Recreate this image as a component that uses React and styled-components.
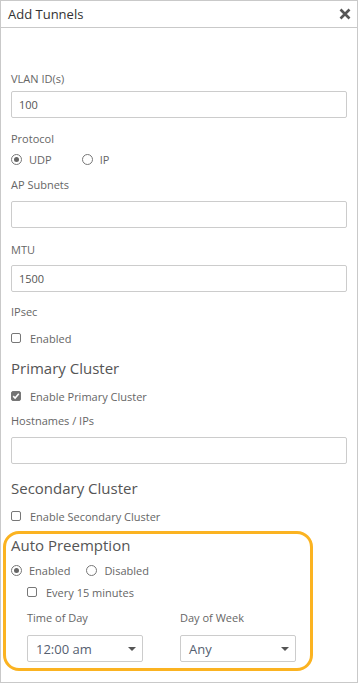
import React from 'react';
import styled, { createGlobalStyle } from 'styled-components';

const GlobalStyle = createGlobalStyle`
  html, body {
    margin: 0;
    padding: 0;
    background: #ffffff;
  }
  body {
    font-family: 'Open Sans', 'Liberation Sans', sans-serif;
  }
`;

const Dialog = styled.div`
  box-sizing: border-box;
  width: 358px;
  height: 683px;
  border: 1px solid #c9c9c9;
  background: #fff;
  display: flex;
  flex-direction: column;
`;

const Header = styled.div`
  height: 26px;
  border-bottom: 1px solid #c9c9c9;
  display: flex;
  align-items: center;
  justify-content: space-between;
  padding: 0 5px 0 7px;
`;

const Title = styled.h1`
  margin: 0;
  font-size: 13px;
  font-weight: normal;
  color: #333;
  line-height: 18px;
`;

const CloseButton = styled.button`
  border: 0;
  background: none;
  padding: 0;
  width: 14px;
  height: 14px;
  display: flex;
  align-items: center;
  justify-content: center;
  cursor: pointer;
`;

const Body = styled.div`
  padding: 43px 10px 0 10px;
`;

const Label = styled.div`
  font-size: 11px;
  line-height: 16px;
  color: #666;
  margin-top: ${(p) => p.$mt || 0}px;
`;

const Heading = styled.div`
  font-size: 15px;
  line-height: 20px;
  color: #555;
  margin-top: ${(p) => p.$mt || 0}px;
`;

const TextInput = styled.input`
  display: block;
  box-sizing: border-box;
  width: 100%;
  height: 27px;
  margin: ${(p) => p.$mt || 0}px 0 0 0;
  padding: 0 7px;
  border: 1px solid #cccccc;
  border-radius: 2px;
  font-family: 'Open Sans', 'Liberation Sans', sans-serif;
  font-size: 11px;
  color: #555;
  outline: none;
`;

const OptionRow = styled.div`
  display: flex;
  align-items: center;
  height: 16px;
  margin-top: ${(p) => p.$mt || 0}px;
`;

const Option = styled.label`
  display: flex;
  align-items: center;
  gap: ${(p) => (p.$box ? 9 : 7)}px;
  margin-right: ${(p) => p.$space || 0}px;
  font-size: 11px;
  color: #666;
`;

const Radio = styled.span`
  box-sizing: border-box;
  width: 11px;
  height: 11px;
  border: 1px solid #777;
  border-radius: 50%;
  display: flex;
  align-items: center;
  justify-content: center;
  &::after {
    content: '';
    display: ${(p) => (p.$checked ? 'block' : 'none')};
    width: 5px;
    height: 5px;
    border-radius: 50%;
    background: #666;
  }
`;

const Box = styled.span`
  box-sizing: border-box;
  width: 10px;
  height: 10px;
  border: 1px solid #777;
  border-radius: 2px;
  background: ${(p) => (p.$checked ? '#737373' : '#fff')};
  display: flex;
  align-items: center;
  justify-content: center;
`;

const Highlight = styled.div`
  margin: 7px 34px 0 -8px;
  border: 3px solid #fbb321;
  border-radius: 16px;
  padding: 1px 5px 6px 5px;
`;

const Indent = styled.div`
  padding-left: 16px;
`;

const SelectGrid = styled.div`
  display: grid;
  grid-template-columns: 116px 116px;
  column-gap: 37px;
  margin-top: 10px;
`;

const SelectBox = styled.div`
  box-sizing: border-box;
  height: 27px;
  margin-top: 9px;
  border: 1px solid #cccccc;
  border-radius: 2px;
  display: flex;
  align-items: center;
  justify-content: space-between;
  padding: 0 6px 0 8px;
  font-size: 13px;
  color: #556070;
`;

const Caret = styled.span`
  width: 0;
  height: 0;
  border-left: 4px solid transparent;
  border-right: 4px solid transparent;
  border-top: 4px solid #555;
`;

function RadioOption({ checked, label, space }) {
  return (
    <Option $space={space}>
      <Radio $checked={checked} />
      {label}
    </Option>
  );
}

function CheckOption({ checked, label }) {
  return (
    <Option $box>
      <Box $checked={checked}>
        {checked && (
          <svg width="8" height="8" viewBox="0 0 8 8">
            <path d="M1.2 4.2 L3.1 6 L6.8 1.8" fill="none" stroke="#fff" strokeWidth="1.6" />
          </svg>
        )}
      </Box>
      {label}
    </Option>
  );
}

function Select({ label, value }) {
  return (
    <div>
      <Label>{label}</Label>
      <SelectBox>
        {value}
        <Caret />
      </SelectBox>
    </div>
  );
}

export default function App() {
  return (
    <>
      <GlobalStyle />
      <Dialog>
        <Header>
          <Title>Add Tunnels</Title>
          <CloseButton aria-label="Close">
            <svg width="12" height="12" viewBox="0 0 12 12">
              <path d="M1.5 1.5 L10.5 10.5 M10.5 1.5 L1.5 10.5" stroke="#555" strokeWidth="2.6" />
            </svg>
          </CloseButton>
        </Header>
        <Body>
          <Label>VLAN ID(s)</Label>
          <TextInput $mt={4} defaultValue="100" readOnly />

          <Label $mt={13}>Protocol</Label>
          <OptionRow $mt={4}>
            <RadioOption checked label="UDP" space={30} />
            <RadioOption label="IP" />
          </OptionRow>

          <Label $mt={10}>AP Subnets</Label>
          <TextInput $mt={8} readOnly />

          <Label $mt={14}>MTU</Label>
          <TextInput $mt={7} defaultValue="1500" readOnly />

          <Label $mt={12}>IPsec</Label>
          <OptionRow $mt={10}>
            <CheckOption label="Enabled" />
          </OptionRow>

          <Heading $mt={12}>Primary Cluster</Heading>
          <OptionRow $mt={10}>
            <CheckOption checked label="Enable Primary Cluster" />
          </OptionRow>
          <Label $mt={9}>Hostnames / IPs</Label>
          <TextInput $mt={8} readOnly />

          <Heading $mt={14}>Secondary Cluster</Heading>
          <OptionRow $mt={10}>
            <CheckOption label="Enable Secondary Cluster" />
          </OptionRow>

          <Highlight>
            <Heading>Auto Preemption</Heading>
            <OptionRow $mt={7}>
              <RadioOption checked label="Enabled" space={16} />
              <RadioOption label="Disabled" />
            </OptionRow>
            <Indent>
              <OptionRow $mt={6}>
                <CheckOption label="Every 15 minutes" />
              </OptionRow>
              <SelectGrid>
                <Select label="Time of Day" value="12:00 am" />
                <Select label="Day of Week" value="Any" />
              </SelectGrid>
            </Indent>
          </Highlight>
        </Body>
      </Dialog>
    </>
  );
}
